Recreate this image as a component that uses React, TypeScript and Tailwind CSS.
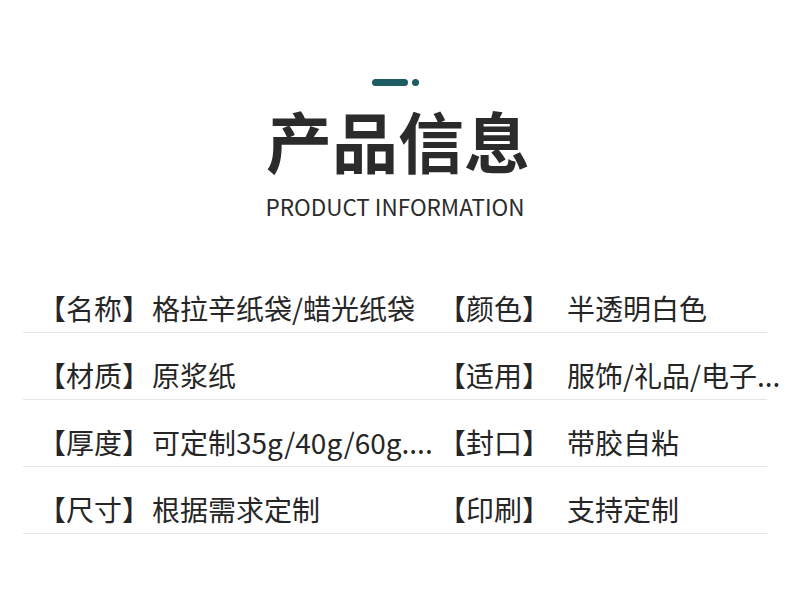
import React from "react";

const rows: [string, string, string, string][] = [
  ["【名称】", "格拉辛纸袋/蜡光纸袋", "【颜色】", "半透明白色"],
  ["【材质】", "原浆纸", "【适用】", "服饰/礼品/电子..."],
  ["【厚度】", "可定制35g/40g/60g....", "【封口】", "带胶自粘"],
  ["【尺寸】", "根据需求定制", "【印刷】", "支持定制"],
];

export default function App() {
  return (
    <div
      className="w-[790px] h-[589px] bg-white overflow-hidden flex flex-col items-center text-[#2b2b2b]"
      style={{ fontFamily: '"Noto Sans CJK SC", "Noto Sans", sans-serif' }}
    >
      <div className="mt-[79px] flex items-center gap-[4px] h-[7px]">
        <div className="w-[36px] h-[7px] rounded-full bg-[#1d5c60]" />
        <div className="w-[7px] h-[7px] rounded-full bg-[#1d5c60]" />
      </div>
      <div className="mt-[20px] pl-[6px] text-[66px] leading-none font-bold text-[#2b2b2b]">产品信息</div>
      <div className="mt-[23px] text-[22.5px] leading-none text-[#2b2b2b]">PRODUCT INFORMATION</div>
      <div className="mt-[48px] w-[744px] self-start ml-[23px]">
        {rows.map((r, i) => (
          <div key={i} className="flex h-[67px] border-b border-[#e6e6e6] text-[28px] leading-none whitespace-nowrap text-[#262626]">
            <div className="w-[415px] shrink-0 flex pt-[28px] pl-[15px]">
              <span className="w-[114px] shrink-0">{r[0]}</span>
              <span>{r[1]}</span>
            </div>
            <div className="flex shrink-0 pt-[28px]">
              <span className="w-[129px] shrink-0">{r[2]}</span>
              <span>{r[3]}</span>
            </div>
          </div>
        ))}
      </div>
    </div>
  );
}
